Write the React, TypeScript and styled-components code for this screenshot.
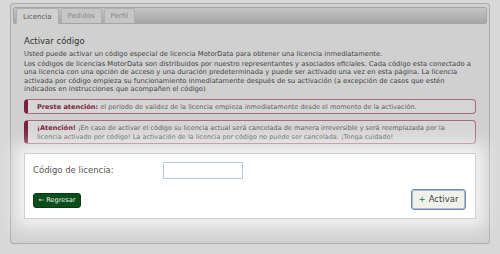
import React from 'react';
import styled, { createGlobalStyle } from 'styled-components';

const GlobalStyle = createGlobalStyle`
  html, body {
    margin: 0;
    padding: 0;
    background: #d8d8d8;
  }
  body {
    font-family: "DejaVu Sans", Verdana, sans-serif;
    color: #444;
  }
`;

const Page = styled.div`
  width: 500px;
  height: 254px;
  padding: 3px 10px 0;
  box-sizing: border-box;
`;

const Panel = styled.div`
  height: 241px;
  border: 1px solid #ababab;
  border-radius: 3px;
  background: #d0d0d0;
  padding: 3px 2px 0 2px;
  box-sizing: border-box;
  display: flex;
  flex-direction: column;
`;

const TabBar = styled.div`
  height: 17px;
  display: flex;
  align-items: flex-end;
  gap: 2px;
  padding-left: 2px;
  border-radius: 2px;
  border: 1px solid #a4a4a4;
  background: linear-gradient(#c4c4c4, #a6a6a6);
  box-sizing: border-box;
`;

const Tab = styled.div<{ $active?: boolean }>`
  height: ${({ $active }) => ($active ? '16px' : '15px')};
  padding: 0 6px;
  display: flex;
  align-items: center;
  font-size: 7px;
  color: ${({ $active }) => ($active ? '#555' : '#888')};
  background: ${({ $active }) => ($active ? '#d0d0d0' : '#c6c6c6')};
  border: 1px solid #b0b0b0;
  border-bottom: none;
  border-radius: 2px 2px 0 0;
  box-sizing: border-box;
  margin-bottom: ${({ $active }) => ($active ? '-1px' : '0')};
`;

const Content = styled.div`
  padding: 12px 11px 0 11px;
  display: flex;
  flex-direction: column;
`;

const Title = styled.h3`
  margin: 0 0 3px;
  font-size: 8.5px;
  font-weight: normal;
  color: #333;
  line-height: 11px;
`;

const Para = styled.p`
  margin: 0 0 1px;
  font-size: 6.75px;
  line-height: 8.6px;
  color: #444;
`;

const AlertList = styled.div`
  margin-top: 4px;
  display: flex;
  flex-direction: column;
  gap: 6px;
`;

const Alert = styled.div`
  padding: 3px 8px 1px 9px;
  border: 1px solid #a86a80;
  border-left: 4px solid #7c1e3c;
  border-radius: 4px;
  background: #d6d6d6;
  font-size: 6.5px;
  line-height: 9px;
  color: #5f5f5f;
`;

const Strong = styled.b`
  color: #7c1e3c;
  font-weight: bold;
  font-size: 6.6px;
`;

const FormBox = styled.div`
  margin-top: 9px;
  height: 66px;
  background: #fff;
  border: 1px solid #cfcfcf;
  box-shadow: 0 0 16px 9px rgba(255, 255, 255, 0.75);
  padding: 8px 9px 0 8px;
  box-sizing: border-box;
  display: flex;
  flex-direction: column;
`;

const FieldRow = styled.div`
  display: flex;
  align-items: center;
  height: 17px;
`;

const Label = styled.label`
  width: 130px;
  font-size: 8.5px;
  color: #555;
`;

const Input = styled.input`
  width: 80px;
  height: 17px;
  box-sizing: border-box;
  border: 1px solid #b9c9dc;
  padding: 0 3px;
  outline: none;
`;

const ButtonRow = styled.div`
  margin-top: 12px;
  display: flex;
  justify-content: space-between;
  align-items: center;
`;

const BackButton = styled.button`
  height: 15px;
  width: 48px;
  padding: 0;
  border: 1px solid #063a12;
  border-radius: 3px;
  background: #0b4d1b;
  color: #e8f0e8;
  font-family: inherit;
  font-size: 6.6px;
  white-space: nowrap;
`;

const ActivateButton = styled.button`
  height: 21px;
  width: 55px;
  margin-top: -2px;
  padding: 0;
  border: 1px solid #6f8cb0;
  box-shadow: inset 0 0 0 1px #aabbd2;
  border-radius: 3px;
  background: #f1f1ec;
  color: #444;
  font-family: inherit;
  font-size: 8.5px;
`;

const Plus = styled.span`
  color: #2a7a3a;
  margin-right: 3px;
`;

export default function App() {
  return (
    <>
      <GlobalStyle />
      <Page>
        <Panel>
          <TabBar>
            <Tab $active>Licencia</Tab>
            <Tab>Pedidos</Tab>
            <Tab>Perfil</Tab>
          </TabBar>
          <Content>
            <Title>Activar código</Title>
            <Para>
              Usted puede activar un código especial de licencia MotorData para obtener una licencia inmediatamente.
            </Para>
            <Para>
              Los códigos de licencias MotorData son distribuidos por nuestro representantes y asociados oficiales. Cada
              código esta conectado a una licencia con una opción de acceso y una duración predeterminada y puede ser
              activado una vez en esta página. La licencia activada por código empieza su funcionamiento inmediatamente
              después de su activación (a excepción de casos que estén indicados en instrucciones que acompañen el
              código)
            </Para>
            <AlertList>
              <Alert>
                <Strong>Preste atención:</Strong> el período de validez de la licencia empieza inmediatamente desde el
                momento de la activación.
              </Alert>
              <Alert>
                <Strong>¡Atención!</Strong> ¡En caso de activar el código su licencia actual será cancelada de manera
                irreversible y será reemplazada por la licencia activado por código! La activación de la licencia por
                código no puede ser cancelada. ¡Tenga cuidado!
              </Alert>
            </AlertList>
            <FormBox>
              <FieldRow>
                <Label>Código de licencia:</Label>
                <Input type="text" />
              </FieldRow>
              <ButtonRow>
                <BackButton>← Regresar</BackButton>
                <ActivateButton>
                  <Plus>+</Plus>Activar
                </ActivateButton>
              </ButtonRow>
            </FormBox>
          </Content>
        </Panel>
      </Page>
    </>
  );
}
